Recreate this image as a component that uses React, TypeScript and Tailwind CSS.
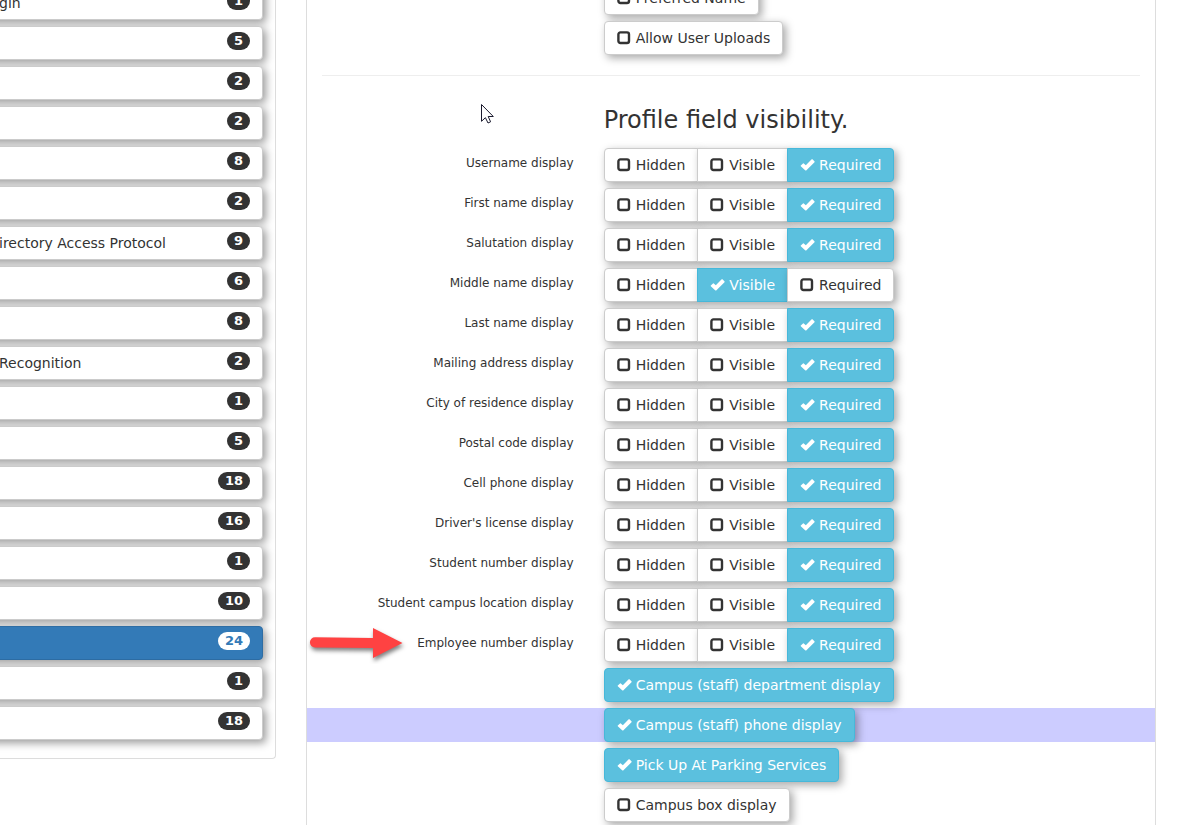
import React, { useState } from 'react';

type Visibility = 'Hidden' | 'Visible' | 'Required';

const OPTIONS: Visibility[] = ['Hidden', 'Visible', 'Required'];

const MENU = [
    { text: 'gin', count: 1 },
    { text: '', count: 5 },
    { text: '', count: 2 },
    { text: '', count: 2 },
    { text: '', count: 8 },
    { text: '', count: 2 },
    { text: 'irectory Access Protocol', count: 9 },
    { text: '', count: 6 },
    { text: '', count: 8 },
    { text: 'Recognition', count: 2 },
    { text: '', count: 1 },
    { text: '', count: 5 },
    { text: '', count: 18 },
    { text: '', count: 16 },
    { text: '', count: 1 },
    { text: '', count: 10 },
    { text: '', count: 24, active: true },
    { text: '', count: 1 },
    { text: '', count: 18 },
];

const FIELDS: { label: string; value: Visibility; flagged?: boolean }[] = [
    { label: 'Username display', value: 'Required' },
    { label: 'First name display', value: 'Required' },
    { label: 'Salutation display', value: 'Required' },
    { label: 'Middle name display', value: 'Visible' },
    { label: 'Last name display', value: 'Required' },
    { label: 'Mailing address display', value: 'Required' },
    { label: 'City of residence display', value: 'Required' },
    { label: 'Postal code display', value: 'Required' },
    { label: 'Cell phone display', value: 'Required' },
    { label: "Driver's license display", value: 'Required' },
    { label: 'Student number display', value: 'Required' },
    { label: 'Student campus location display', value: 'Required' },
    { label: 'Employee number display', value: 'Required', flagged: true },
];

const TOGGLES = [
    { label: 'Campus (staff) department display', on: true },
    { label: 'Campus (staff) phone display', on: true, highlight: true },
    { label: 'Pick Up At Parking Services', on: true },
    { label: 'Campus box display', on: false },
];

const StateIcon: React.FC<{ on: boolean }> = ({ on }) =>
    on ? (
        <svg className="h-[14px] w-[15px] shrink-0" viewBox="0 0 15 14" fill="currentColor" aria-hidden="true">
            <path d="M.8 7.6 3 5.4Q3.4 5.1 3.8 5.4L5.8 7.3 11.7 1.3Q12.1 1 12.5 1.3L14.6 3.4Q14.9 3.8 14.5 4.2L6.2 12.4Q5.8 12.7 5.4 12.4L.8 8.3Q.5 7.9 .8 7.6Z" />
        </svg>
    ) : (
        <svg className="h-[14px] w-[15px] shrink-0" viewBox="0 0 15 14" fill="none" stroke="currentColor" strokeWidth="2.4" aria-hidden="true">
            <rect x="1.4" y="1.4" width="10.6" height="10.6" rx="2" />
        </svg>
    );

interface ChoiceProps {
    type: 'radio' | 'checkbox';
    name?: string;
    label: string;
    checked: boolean;
    onChange: () => void;
    className?: string;
}

const Choice: React.FC<ChoiceProps> = ({ type, name, label, checked, onChange, className = '' }) => (
    <label
        className={`relative inline-flex h-[34px] cursor-pointer items-center gap-1 border px-3 text-sm whitespace-nowrap shadow-[3px_3px_8px_rgba(0,0,0,0.35)] ${
            checked ? 'border-[#46b8da] bg-[#5bc0de] text-white' : 'border-[#ccc] bg-white text-[#333]'
        } ${className}`}
    >
        <input type={type} name={name} checked={checked} onChange={onChange} className="sr-only" />
        <StateIcon on={checked} />
        <span>{label}</span>
    </label>
);

// Red pointer drawn in front of a field's label
const Arrow = () => (
    <svg className="absolute top-[-4px] left-0 h-10 w-[104px]" viewBox="0 0 104 40" aria-hidden="true">
        <g className="drop-shadow-[1px_3px_2px_rgba(0,0,0,0.5)]" fill="#ff4242">
            <path d="M8 13.2 66 14V4L95.5 19 66 34V24L8 23.4A5.1 5.1 0 0 1 8 13.2Z" />
        </g>
    </svg>
);

const Pointer = () => (
    <svg className="absolute top-[29px] left-[174px] h-5 w-3.5" viewBox="0 0 14 20" aria-hidden="true">
        <path d="M.5 .5V17.3L4.4 13.7 7 19 9.6 17.8 7.2 12.5H12.3Z" fill="#fff" stroke="#1a1a2e" />
    </svg>
);

const FieldRow: React.FC<{ label: string; initial: Visibility; flagged?: boolean }> = ({ label, initial, flagged }) => {
    const [value, setValue] = useState<Visibility>(initial);

    return (
        <fieldset aria-label={label} className="relative mb-1.5 grid grid-cols-3">
            <div className="pt-[5px] pr-4 text-right text-xs leading-5 whitespace-nowrap">{label}</div>
            <div className="col-span-2 flex px-3.5">
                {OPTIONS.map(option => (
                    <Choice
                        key={option}
                        type="radio"
                        name={label}
                        label={option}
                        checked={value === option}
                        onChange={() => setValue(option)}
                        className="-ml-px first:ml-0 first:rounded-l last:rounded-r"
                    />
                ))}
            </div>
            {flagged && <Arrow />}
        </fieldset>
    );
};

const ToggleRow: React.FC<{ label: string; initial: boolean; highlight?: boolean }> = ({ label, initial, highlight }) => {
    const [on, setOn] = useState(initial);

    return (
        <div className={`mb-1.5 grid grid-cols-3 ${highlight ? 'bg-[#ccf]' : ''}`}>
            <div className="col-span-2 col-start-2 flex px-3.5">
                <Choice type="checkbox" label={label} checked={on} onChange={() => setOn(!on)} className="rounded" />
            </div>
        </div>
    );
};

const App: React.FC = () => (
    <div className="flex h-screen items-start overflow-hidden bg-white font-['Verdana','DejaVu_Sans',sans-serif] text-[#333]">
        <nav className="-mt-5 -ml-4 w-[calc(23%+16px)] shrink-0 rounded-br border-r border-b border-[#ddd] pt-1.5 pr-3 pb-3">
            <ul>
                {MENU.map((item, i) => (
                    <li key={i} className="mb-1.5">
                        <a
                            href="#"
                            className={`flex h-[34px] items-start justify-between rounded border pr-3 pl-3.5 shadow-[3px_3px_8px_rgba(0,0,0,0.4)] ${
                                item.active ? 'border-[#2e6da4] bg-[#337ab7] text-white' : 'border-[#ccc] bg-white'
                            }`}
                        >
                            <span className="pt-1.5 text-sm whitespace-nowrap">{item.text}</span>
                            <span
                                className={`mt-[5px] rounded-full px-[7px] text-[13px] leading-[18px] font-bold ${
                                    item.active ? 'bg-white text-[#337ab7]' : 'bg-[#333] text-white'
                                }`}
                            >
                                {item.count}
                            </span>
                        </a>
                    </li>
                ))}
            </ul>
        </nav>

        <main className="-mt-[19px] mr-11 ml-[30px] min-w-0 flex-1 border-x border-[#ddd]">
            <ToggleRow label="Preferred Name" initial={false} />
            <ToggleRow label="Allow User Uploads" initial={false} />

            <section className="relative">
                <hr className="mx-[15px] mt-5 border-[#eee]" />
                <Pointer />
                <div className="grid grid-cols-3">
                    <h3 className="col-span-2 col-start-2 mt-7 mb-3 px-3.5 text-2xl">Profile field visibility.</h3>
                </div>
            </section>

            {FIELDS.map(field => (
                <FieldRow key={field.label} label={field.label} initial={field.value} flagged={field.flagged} />
            ))}

            {TOGGLES.map(toggle => (
                <ToggleRow key={toggle.label} label={toggle.label} initial={toggle.on} highlight={toggle.highlight} />
            ))}
        </main>
    </div>
);

export default App;
